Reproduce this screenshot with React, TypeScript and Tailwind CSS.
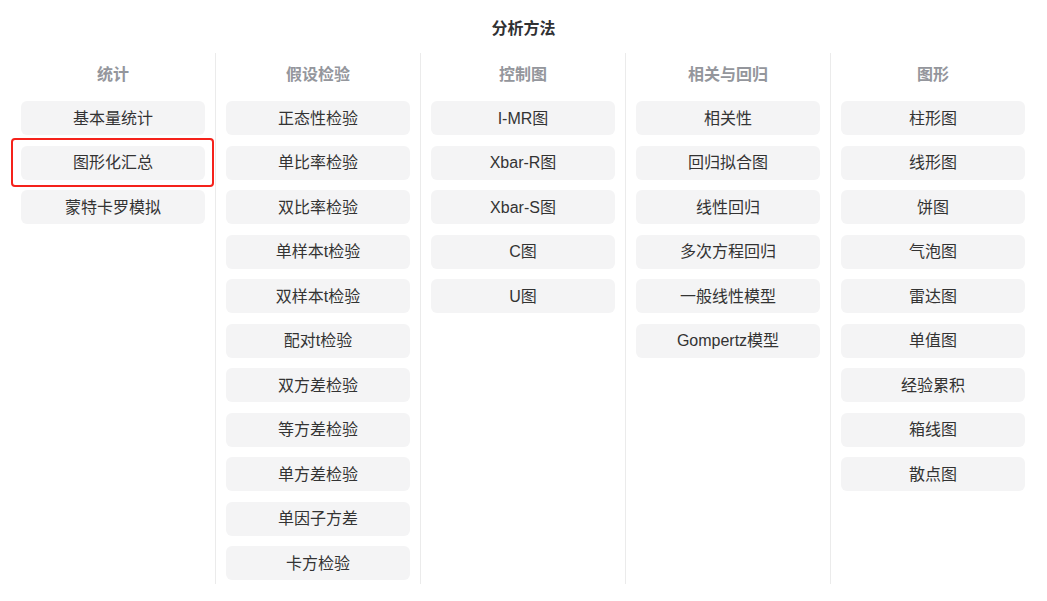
import React from "react";

const columns: { title: string; items: string[] }[] = [
  { title: "统计", items: ["基本量统计", "图形化汇总", "蒙特卡罗模拟"] },
  {
    title: "假设检验",
    items: [
      "正态性检验",
      "单比率检验",
      "双比率检验",
      "单样本t检验",
      "双样本t检验",
      "配对t检验",
      "双方差检验",
      "等方差检验",
      "单方差检验",
      "单因子方差",
      "卡方检验",
    ],
  },
  { title: "控制图", items: ["I-MR图", "Xbar-R图", "Xbar-S图", "C图", "U图"] },
  {
    title: "相关与回归",
    items: ["相关性", "回归拟合图", "线性回归", "多次方程回归", "一般线性模型", "Gompertz模型"],
  },
  {
    title: "图形",
    items: ["柱形图", "线形图", "饼图", "气泡图", "雷达图", "单值图", "经验累积", "箱线图", "散点图"],
  },
];

export default function App() {
  return (
    <div
      className="w-[1047px] h-[601px] bg-white text-[#333333]"
      style={{ fontFamily: '"Liberation Sans", "Noto Sans CJK SC", sans-serif' }}
    >
      <div className="h-[53px] flex items-center justify-center pt-[4px] text-[16px] font-bold text-[#303133]">
        分析方法
      </div>
      <div className="pl-[10px] flex">
        {columns.map((col, ci) => (
          <div
            key={col.title}
            className={
              "w-[205px] pl-[10px] pr-[10px] pb-[4px] border-l " +
              (ci === 0 ? "border-transparent" : "border-[#ebebeb]")
            }
          >
            <div className="h-[42px] flex items-center justify-center pt-[2px] text-[16px] font-bold text-[#94969c]">
              {col.title}
            </div>
            <div className="mt-[6px] flex flex-col gap-[10.5px]">
              {col.items.map((item) => (
                <div
                  key={item}
                  className="relative h-[34px] w-[184px] rounded-[6px] bg-[#f4f4f5] flex items-center justify-center pt-[1px] text-[16px] text-[#333333]"
                >
                  {item}
                  {item === "图形化汇总" && (
                    <div className="absolute left-[-10px] right-[-9px] top-[-8px] bottom-[-7px] border-2 border-[#f5221b] rounded-[4px]" />
                  )}
                </div>
              ))}
            </div>
          </div>
        ))}
      </div>
    </div>
  );
}
